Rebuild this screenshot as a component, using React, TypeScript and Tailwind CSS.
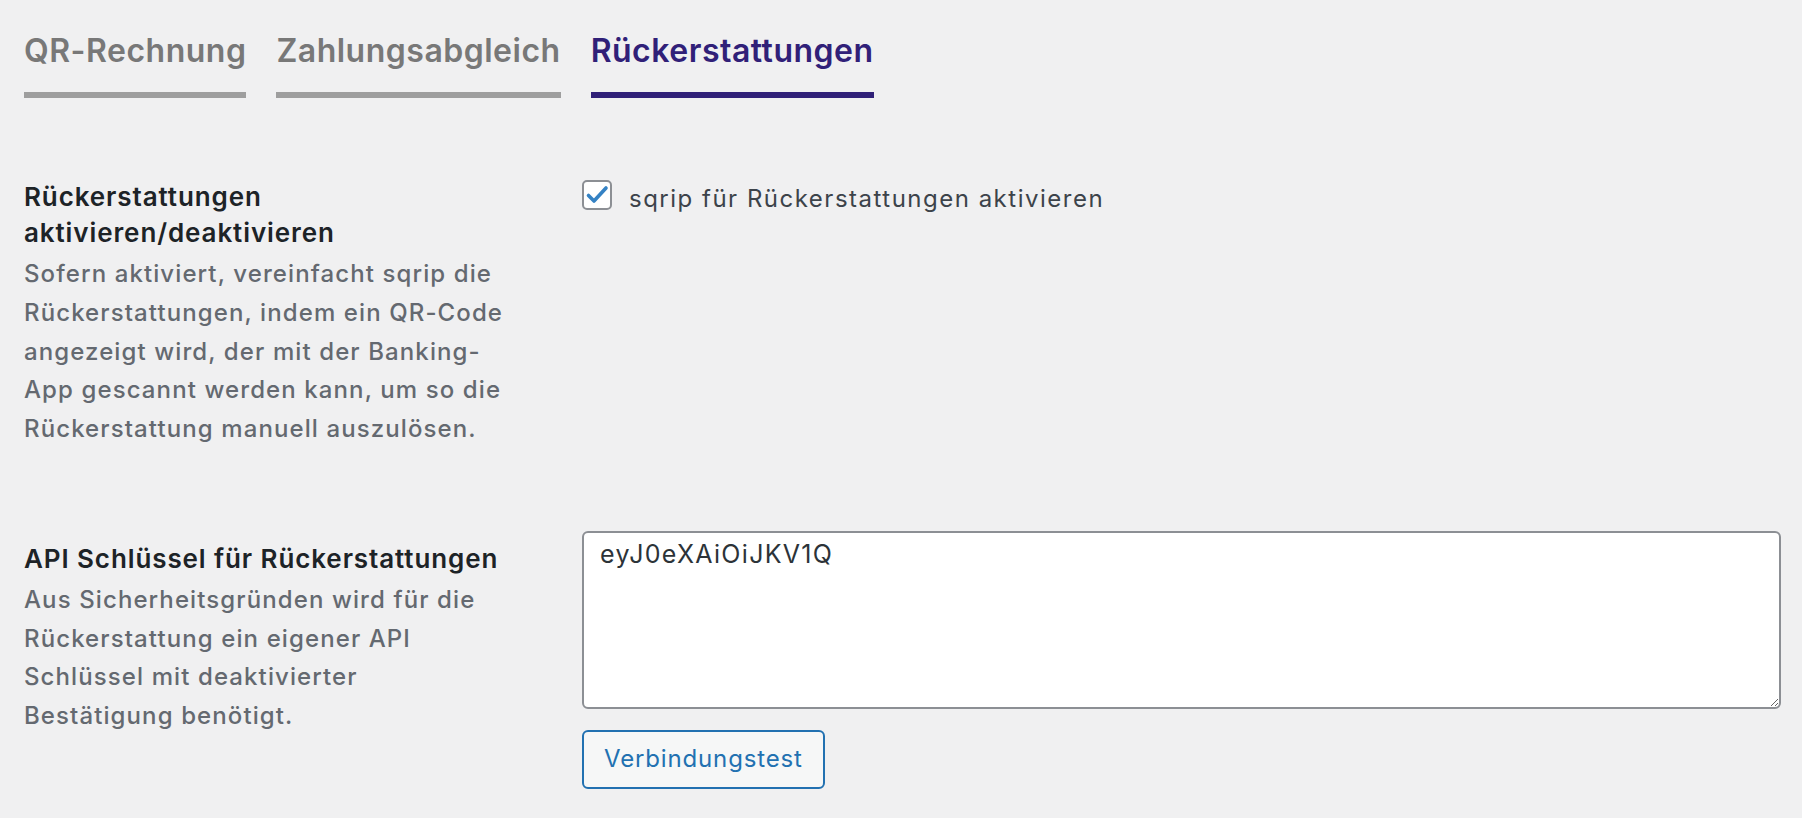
const tabs = [
  { label: "QR-Rechnung", active: false },
  { label: "Zahlungsabgleich", active: false },
  { label: "Rückerstattungen", active: true },
];

const App: React.FC = () => {
  return (
    <div className="min-h-[818px] w-full bg-[#f0f0f1] font-['Inter',sans-serif]">
      {/* Tabs */}
      <nav className="flex gap-[30px] pl-[24px]">
        {tabs.map((tab) => (
          <a
            key={tab.label}
            href="#"
            className={
              tab.active
                ? "pt-[31px] pb-[21px] border-b-[6px] border-[#302078] text-[#302078] text-[32px] leading-[40px] font-semibold tracking-[0.5px]"
                : "pt-[31px] pb-[21px] border-b-[6px] border-[#9e9e9e] text-[#787878] text-[32px] leading-[40px] font-semibold tracking-[0.5px]"
            }
          >
            {tab.label}
          </a>
        ))}
      </nav>

      <div className="pl-[24px] pr-[21px]">
        {/* Rückerstattungen aktivieren */}
        <div className="flex mt-[81px]">
          <div className="w-[558px] shrink-0 pr-[70px]">
            <h2 className="text-[26px] leading-[36px] font-semibold tracking-[0.9px] text-[#1d2327]">
              Rückerstattungen aktivieren/deaktivieren
            </h2>
            <p className="mt-[4px] text-[24px] leading-[38.75px] font-medium tracking-[1.1px] text-[#646970]">
              Sofern aktiviert, vereinfacht sqrip die Rückerstattungen, indem ein QR-Code angezeigt wird, der mit der Banking-App gescannt werden kann, um so die Rückerstattung manuell auszulösen.
            </p>
          </div>
          <label className="flex items-start gap-[17px] cursor-pointer">
            <span className="mt-[1px] flex items-center justify-center w-[30px] h-[30px] rounded-[5px] border-2 border-[#8c8f94] bg-white">
              <svg width="24" height="24" viewBox="0 0 24 24">
                <path
                  d="M3.5 12.5l5.5 5.5L21 5"
                  fill="none"
                  stroke="#3582c4"
                  strokeWidth="3.6"
                  strokeLinecap="round"
                  strokeLinejoin="round"
                />
              </svg>
            </span>
            <span className="mt-[2px] text-[24px] leading-[36px] tracking-[1.5px] text-[#3c434a]">
              sqrip für Rückerstattungen aktivieren
            </span>
          </label>
        </div>

        {/* API Schlüssel */}
        <div className="flex mt-[82px]">
          <div className="w-[558px] shrink-0 pr-[70px] pt-[10px]">
            <h2 className="text-[26px] leading-[36px] font-semibold tracking-[0.9px] text-[#1d2327]">
              API Schlüssel für Rückerstattungen
            </h2>
            <p className="mt-[4px] text-[24px] leading-[38.75px] font-medium tracking-[1.1px] text-[#646970]">
              Aus Sicherheitsgründen wird für die Rückerstattung ein eigener API Schlüssel mit deaktivierter Bestätigung benötigt.
            </p>
          </div>
          <div className="flex-1">
            <textarea
              defaultValue="eyJ0eXAiOiJKV1Q"
              className="block w-full h-[178px] rounded-[6px] border-2 border-[#8c8f94] bg-white pt-[3px] px-[16px] text-[25px] leading-[36px] tracking-[1.3px] text-[#2c3338] outline-none resize-y"
            />
            <button className="mt-[21px] h-[59px] px-[20px] rounded-[6px] border-2 border-[#2271b1] bg-[#f6f7f7] text-[24px] tracking-[0.85px] text-[#2271b1]">
              Verbindungstest
            </button>
          </div>
        </div>
      </div>
    </div>
  );
};

export default App;
